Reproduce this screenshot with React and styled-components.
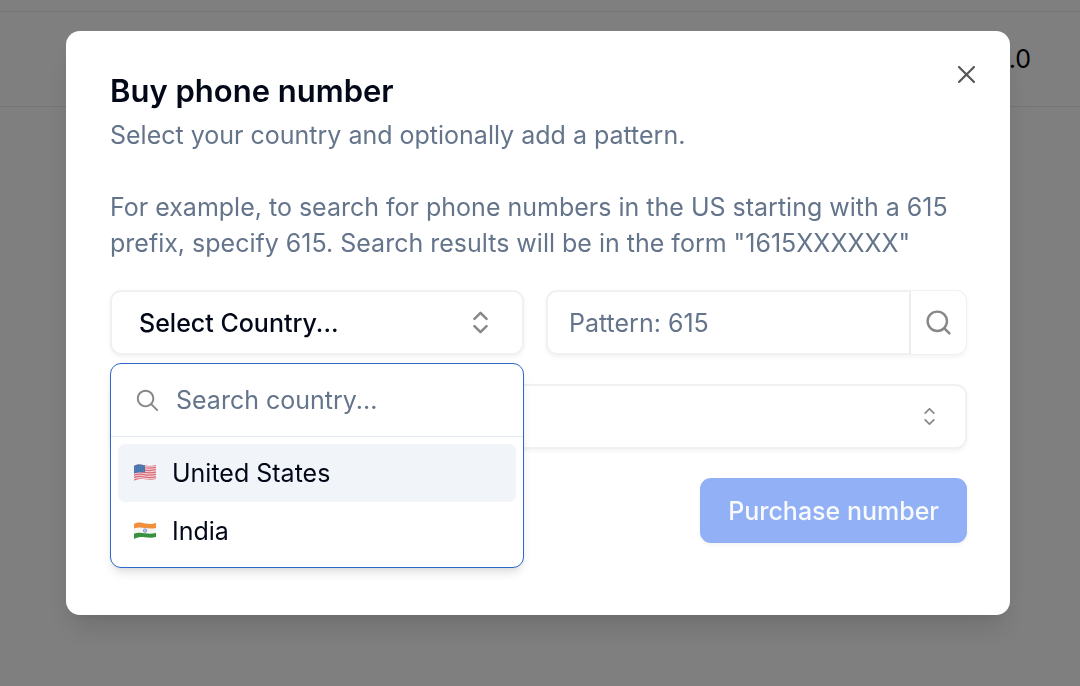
import React from "react";
import styled, { createGlobalStyle } from "styled-components";
import { ChevronsUpDown, Search } from "lucide-react";
import { RxCaretSort, RxCross2, RxMagnifyingGlass } from "react-icons/rx";

const GlobalStyle = createGlobalStyle`
    *, *::before, *::after {
        box-sizing: border-box;
    }

    body {
        margin: 0;
        background: #fff;
        color: #020817;
        font-family: Inter, "Liberation Sans", sans-serif;
        font-size: 25px;
        line-height: 36px;
    }

    button, input, select {
        margin: 0;
        font: inherit;
        color: inherit;
    }

    svg {
        display: block;
        flex: none;
    }
`;

const Page = styled.main`
    padding-top: 11px;
`;

const BalanceBar = styled.div`
    display: flex;
    align-items: center;
    justify-content: flex-end;
    height: 96px;
    padding-right: 49px;
    border: 1px solid #e2e8f0;
    border-width: 1px 0;
    color: #000;
`;

const Overlay = styled.div`
    position: fixed;
    inset: 0;
    display: flex;
    align-items: flex-start;
    padding: 31px 70px 31px 66px;
    background: rgba(0, 0, 0, 0.5);
`;

const Dialog = styled.section`
    flex: 1;
    min-width: 0;
    display: flex;
    flex-direction: column;
    gap: 29px;
    padding: 44px 43px 72px 44px;
    background: #fff;
    border-radius: 14px;
    box-shadow: 0 18px 27px -5px rgba(0, 0, 0, 0.12), 0 7px 11px -7px rgba(0, 0, 0, 0.1);
`;

const Header = styled.header`
    display: flex;
    align-items: flex-start;
    justify-content: space-between;
`;

const Title = styled.h2`
    margin: 0 0 10px;
    font-size: 31px;
    line-height: 32px;
    font-weight: 600;
`;

const Description = styled.p`
    margin: 0;
    color: #64748b;

    & + & {
        margin-top: 36px;
    }
`;

const CloseButton = styled.button`
    flex: none;
    width: 29px;
    height: 29px;
    padding: 0;
    margin: -15px -14px 0 -15px;
    border: 0;
    background: none;
    color: #111;

    svg {
        opacity: 0.7;
    }
`;

const Fields = styled.div`
    display: grid;
    grid-template-columns: minmax(0, 414fr) minmax(0, 421fr);
    gap: 29px 22px;
`;

const CountryPicker = styled.div`
    position: relative;
`;

const control = `
    height: 65px;
    border: 2px solid #eff1f3;
    border-radius: 11px;
    background: #fff;
    box-shadow: 0 2px 4px rgba(0, 0, 0, 0.05);

    svg {
        color: #111;
        opacity: 0.5;
    }
`;

const CountryButton = styled.button`
    ${control}
    display: flex;
    align-items: center;
    justify-content: space-between;
    width: 100%;
    padding: 0 27px;
    font-weight: 500;
`;

const Popover = styled.div`
    position: absolute;
    top: 73px;
    left: 0;
    right: 0;
    z-index: 1;
    border: 1px solid #2f66c9;
    border-radius: 11px;
    background: #fff;
    box-shadow: 0 7px 11px -2px rgba(0, 0, 0, 0.1), 0 4px 7px -4px rgba(0, 0, 0, 0.1);
`;

const SearchBox = styled.label`
    display: flex;
    align-items: center;
    gap: 14px;
    height: 73px;
    padding: 0 22px;
    border-bottom: 1px solid #e2e8f0;

    svg {
        color: #111;
        opacity: 0.5;
    }
`;

const TextInput = styled.input`
    flex: 1;
    min-width: 0;
    padding: 0;
    border: 0;
    outline: 0;
    background: none;

    &::placeholder {
        color: #64748b;
        opacity: 1;
    }
`;

const CountryList = styled.ul`
    margin: 0;
    padding: 7px;
    list-style: none;
`;

const Country = styled.li`
    display: flex;
    align-items: center;
    gap: 15px;
    height: 58px;
    padding: 0 15px;
    border-radius: 7px;
    background: ${({ $active }) => ($active ? "#f1f5f9" : "transparent")};
`;

const PatternGroup = styled.div`
    display: flex;
`;

const PatternInput = styled(TextInput)`
    ${control}
    padding: 0 21px;
    border-radius: 11px 0 0 11px;
`;

const SearchButton = styled.button`
    ${control}
    display: grid;
    place-items: center;
    width: 56px;
    padding: 0;
    border-width: 1px 1px 1px 0;
    border-radius: 0 11px 11px 0;
`;

const NumberField = styled.div`
    ${control}
    grid-column: 1 / -1;
    display: flex;
    align-items: center;
    padding: 0 21px;
`;

const NumberSelect = styled.select`
    flex: 1;
    height: 100%;
    border: 0;
    outline: 0;
    appearance: none;
    background: none;
`;

const Footer = styled.footer`
    display: flex;
    justify-content: flex-end;
`;

const PurchaseButton = styled.button`
    height: 65px;
    padding: 0 28px;
    border: 0;
    border-radius: 11px;
    background: #92b0f5;
    color: #f8fafc;
    font-weight: 500;
    box-shadow: 0 2px 4px rgba(0, 0, 0, 0.05);
`;

function UnitedStatesFlag() {
    return (
        <svg width="24" height="20" viewBox="0 0 24 20" aria-hidden="true">
            <clipPath id="us">
                <path d="M1 3C5 .8 8 1.6 12 2.4S19 3 23 2v14c-4 1.2-7 .8-11 .3S5 16 1 18Z" />
            </clipPath>
            <g clipPath="url(#us)">
                <path fill="#f1d3d8" d="M0 0h24v20H0z" />
                <g fill="none" stroke="#dc6b79" strokeWidth="1.25">
                    {[0, 2.35, 4.7, 7.05, 9.4, 11.75, 14.1].map((y) => (
                        <path key={y} transform={`translate(0 ${y})`} d="M1 3C5 .8 8 1.6 12 2.4S19 3 23 2" />
                    ))}
                </g>
                <path fill="#4774ad" d="M1 0h11v9.6C8 9 5 9 1 10.5Z" />
                <g fill="none" stroke="#7f9fca" strokeWidth="0.6" strokeDasharray="0.8 1.2">
                    <path d="M2 4.5c3-1.5 6-1.2 9-.7M2 6.7c3-1.5 6-1.2 9-.7M2 8.9c3-1.5 6-1.2 9-.7" />
                </g>
            </g>
        </svg>
    );
}

function IndiaFlag() {
    return (
        <svg width="24" height="20" viewBox="0 0 24 20" aria-hidden="true">
            <clipPath id="in">
                <path d="M1 3C5 .8 8 1.6 12 2.4S19 3 23 2v14c-4 1.2-7 .8-11 .3S5 16 1 18Z" />
            </clipPath>
            <g clipPath="url(#in)">
                <path fill="#f5f5f4" d="M0 0h24v20H0z" />
                <path fill="#f08f3c" d="M0 0h24v6.7c-4 1.2-8 1-12 .4S5 6 0 8Z" />
                <path fill="#36923f" d="M0 13c5-2 8-1.3 12-.7s8 .6 12-.6V20H0Z" />
                <circle cx="12" cy="9.6" r="1.7" fill="#c5cbe6" stroke="#6672b5" strokeWidth="0.7" />
            </g>
        </svg>
    );
}

const countries = [
    { name: "United States", Flag: UnitedStatesFlag },
    { name: "India", Flag: IndiaFlag },
];

function CountrySelect() {
    return (
        <CountryPicker>
            <CountryButton type="button" role="combobox" aria-expanded="true" aria-controls="countries">
                Select Country...
                <ChevronsUpDown size={29} />
            </CountryButton>
            <Popover>
                <SearchBox>
                    <RxMagnifyingGlass size={29} />
                    <TextInput type="text" placeholder="Search country..." aria-label="Search country" />
                </SearchBox>
                <CountryList id="countries" role="listbox" aria-label="Countries">
                    {countries.map(({ name, Flag }, i) => (
                        <Country key={name} role="option" aria-selected={i === 0} $active={i === 0}>
                            <Flag />
                            {name}
                        </Country>
                    ))}
                </CountryList>
            </Popover>
        </CountryPicker>
    );
}

function App() {
    return (
        <>
            <GlobalStyle />
            <Page>
                <BalanceBar>.0</BalanceBar>
            </Page>
            <Overlay>
                <Dialog role="dialog" aria-modal="true" aria-labelledby="buy-title">
                    <Header>
                        <div>
                            <Title id="buy-title">Buy phone number</Title>
                            <Description>Select your country and optionally add a pattern.</Description>
                            <Description>
                                For example, to search for phone numbers in the US starting with a 615
                                prefix, specify 615. Search results will be in the form "1615XXXXXX"
                            </Description>
                        </div>
                        <CloseButton type="button" aria-label="Close">
                            <RxCross2 size={29} />
                        </CloseButton>
                    </Header>
                    <Fields>
                        <CountrySelect />
                        <PatternGroup>
                            <PatternInput type="text" placeholder="Pattern: 615" aria-label="Pattern" />
                            <SearchButton type="button" aria-label="Search numbers">
                                <Search size={29} />
                            </SearchButton>
                        </PatternGroup>
                        <NumberField>
                            <NumberSelect aria-label="Phone number" />
                            <RxCaretSort size={29} />
                        </NumberField>
                    </Fields>
                    <Footer>
                        <PurchaseButton type="button">Purchase number</PurchaseButton>
                    </Footer>
                </Dialog>
            </Overlay>
        </>
    );
}

export default App;
